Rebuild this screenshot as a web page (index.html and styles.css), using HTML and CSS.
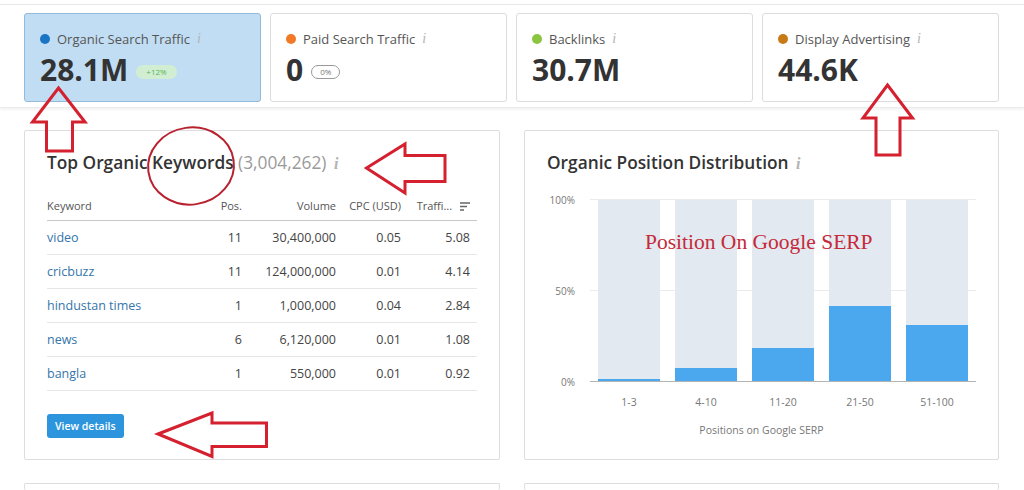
FILE: index.html
```html
<!DOCTYPE html>
<html lang="en">
<head>
<meta charset="utf-8">
<title>Domain Overview</title>
<link rel="stylesheet" href="styles.css">
</head>
<body>
<div class="summary">
  <div class="card card-active">
    <div class="card-label"><span class="dot dot-blue"></span>Organic Search Traffic <span class="info">i</span></div>
    <div class="card-value">28.1M <span class="badge badge-up">+12%</span></div>
  </div>
  <div class="card">
    <div class="card-label"><span class="dot dot-orange"></span>Paid Search Traffic <span class="info">i</span></div>
    <div class="card-value">0 <span class="badge badge-zero">0%</span></div>
  </div>
  <div class="card">
    <div class="card-label"><span class="dot dot-green"></span>Backlinks <span class="info">i</span></div>
    <div class="card-value">30.7M</div>
  </div>
  <div class="card">
    <div class="card-label"><span class="dot dot-brown"></span>Display Advertising <span class="info">i</span></div>
    <div class="card-value">44.6K</div>
  </div>
</div>

<div class="panels">
  <section class="panel">
    <h2 class="panel-title">Top Organic Keywords <span class="count">(3,004,262)</span> <span class="info info-lg">i</span></h2>
    <table class="kw">
      <colgroup><col class="c1"><col class="c2"><col class="c3"><col class="c4"><col class="c5"></colgroup>
      <thead>
        <tr><th class="l">Keyword</th><th>Pos.</th><th>Volume</th><th>CPC (USD)</th><th class="tr">Traffi... <svg class="sort" width="10" height="9" viewBox="0 0 10 9"><path d="M0 1h10M0 4.5h7M0 8h4" stroke="#666" stroke-width="1.4"/></svg></th></tr>
      </thead>
      <tbody>
        <tr><td class="l"><a>video</a></td><td>11</td><td>30,400,000</td><td>0.05</td><td class="tr">5.08</td></tr>
        <tr><td class="l"><a>cricbuzz</a></td><td>11</td><td>124,000,000</td><td>0.01</td><td class="tr">4.14</td></tr>
        <tr><td class="l"><a>hindustan times</a></td><td>1</td><td>1,000,000</td><td>0.04</td><td class="tr">2.84</td></tr>
        <tr><td class="l"><a>news</a></td><td>6</td><td>6,120,000</td><td>0.01</td><td class="tr">1.08</td></tr>
        <tr><td class="l"><a>bangla</a></td><td>1</td><td>550,000</td><td>0.01</td><td class="tr">0.92</td></tr>
      </tbody>
    </table>
    <button class="btn">View details</button>
  </section>

  <section class="panel">
    <h2 class="panel-title">Organic Position Distribution <span class="info info-lg">i</span></h2>
    <div class="chart">
      <div class="yaxis"><span>100%</span><span>50%</span><span>0%</span></div>
      <div class="plot-wrap">
        <div class="plot">
          <div class="bar"><div class="fill" style="height:1.2%"></div></div>
          <div class="bar"><div class="fill" style="height:7.4%"></div></div>
          <div class="bar"><div class="fill" style="height:18.2%"></div></div>
          <div class="bar"><div class="fill" style="height:41.2%"></div></div>
          <div class="bar"><div class="fill" style="height:30.9%"></div></div>
        </div>
        <div class="xlabels"><span>1-3</span><span>4-10</span><span>11-20</span><span>21-50</span><span>51-100</span></div>
      </div>
    </div>
    <div class="xtitle">Positions on Google SERP</div>
  </section>

  <section class="panel panel-next"></section>
  <section class="panel panel-next"></section>
</div>

<div class="annotations">
  <svg class="marks" width="1024" height="490" viewBox="0 0 1024 490">
    <g fill="none" stroke="#d4202f" stroke-width="3" stroke-linejoin="miter">
      <path d="M58.5 88 L85 122 L72.5 122 L72.5 151 L46.5 151 L46.5 122 L32.5 122 Z"/>
      <path d="M887.5 85 L912.5 118 L900 118 L900 155 L876 155 L876 118 L863 118 Z"/>
      <path d="M366.5 168 L405 144 L405 155.5 L445 155.5 L445 181.5 L405 181.5 L405 193 Z"/>
      <path d="M158 434 L212 413 L212 423 L266.5 423 L266.5 446.5 L212 446.5 L212 456.5 Z"/>
    </g>
    <ellipse cx="191" cy="166" rx="43" ry="38.5" fill="none" stroke="#b8212e" stroke-width="2" transform="rotate(-8 191 166)"/>
  </svg>
  <div class="note">Position On Google SERP</div>
</div>
</body>
</html>
```

FILE: styles.css
```css
* { box-sizing: border-box; }

html, body {
  margin: 0;
  padding: 0;
  background: #ffffff;
}

body {
  font-family: "Open Sans", "Noto Sans", sans-serif;
  color: #333333;
  width: 1024px;
  height: 490px;
  overflow: hidden;
  position: relative;
}

/* ---------- summary cards ---------- */
.summary {
  margin-top: 4px;
  border-top: 1px solid #e8e8e8;
  border-bottom: 1px solid #ececec;
  box-shadow: 0 2px 2px rgba(0, 0, 0, 0.05);
  padding: 8px 25px 5px 24px;
  display: grid;
  grid-template-columns: repeat(4, 1fr);
  gap: 9px;
}

.card {
  height: 89px;
  border: 1px solid #dcdcdc;
  border-radius: 3px;
  background: #ffffff;
  padding: 15px 14px 0 15px;
}

.card-active {
  background: #c1ddf3;
  border-color: #93bad8;
}

.card-label {
  display: flex;
  align-items: center;
  height: 20px;
  font-size: 13px;
  color: #555555;
  white-space: nowrap;
}

.dot {
  width: 10px;
  height: 10px;
  border-radius: 50%;
  margin-right: 7px;
  flex: none;
}
.dot-blue { background: #1b75c4; }
.dot-orange { background: #f07a26; }
.dot-green { background: #8bc53f; }
.dot-brown { background: #c87a14; }

.info {
  font-family: "Liberation Serif", "DejaVu Serif", serif;
  font-style: italic;
  color: #b3b3b3;
  font-size: 14px;
  margin-left: 7px;
}
.info-lg { font-size: 16px; margin-left: 3px; }

.card-value {
  margin-top: 3px;
  font-size: 30px;
  line-height: 36px;
  font-weight: 700;
  color: #333333;
  display: flex;
  align-items: center;
}

.badge {
  display: inline-block;
  margin-left: 8px;
  margin-top: 3px;
  height: 14px;
  line-height: 14px;
  padding: 0 7px;
  border-radius: 7px;
  font-size: 8px;
  font-weight: 400;
}
.badge-up {
  background: #d2eed2;
  color: #56b356;
  padding: 0 10px;
}
.badge-zero {
  border: 1px solid #9a9a9a;
  color: #777777;
  line-height: 12px;
  padding: 0 8px;
}

/* ---------- panels ---------- */
.panels {
  margin-top: 22px;
  padding: 0 25px 0 24px;
  display: grid;
  grid-template-columns: 1fr 1fr;
  column-gap: 24px;
  row-gap: 23px;
}

.panel {
  border: 1px solid #dddddd;
  border-radius: 2px;
  background: #ffffff;
  padding: 20px 22px 21px 22px;
}

.panel-next {
  height: 7px;
  padding: 0;
  border-bottom: none;
}

.panel-title {
  margin: 0;
  font-size: 17.3px;
  line-height: 24px;
  font-weight: 600;
  color: #333333;
  white-space: nowrap;
}
.count {
  font-weight: 400;
  color: #9a9a9a;
}

/* ---------- keywords table ---------- */
.kw {
  margin-top: 12px;
  width: 430px;
  border-collapse: collapse;
  table-layout: fixed;
  font-size: 12.5px;
}
.c1 { width: 140px; }
.c2 { width: 55px; }
.c3 { width: 94px; }
.c4 { width: 65px; }
.c5 { width: 76px; }

.kw th {
  height: 32px;
  font-size: 11px;
  font-weight: 400;
  color: #555555;
  text-align: right;
  vertical-align: bottom;
  padding: 0 0 7px 0;
  border-bottom: 1px solid #c8c8c8;
  white-space: nowrap;
}
.kw td {
  height: 34px;
  text-align: right;
  padding: 0;
  color: #444444;
  border-bottom: 1px solid #e6e6e6;
  white-space: nowrap;
}
.kw .l { text-align: left; }
.kw .tr { padding-right: 7px; }
.kw th.tr { padding-right: 7px; }
.kw a { color: #3575aa; }

.sort {
  margin-left: 5px;
  vertical-align: -1px;
}

.btn {
  margin-top: 23px;
  display: block;
  height: 24px;
  padding: 0 8px;
  border: none;
  border-radius: 3px;
  background: #2d95dd;
  color: #ffffff;
  font-family: "Open Sans", sans-serif;
  font-size: 10.5px;
  font-weight: 600;
}

/* ---------- chart ---------- */
.chart {
  margin-top: 24px;
  display: flex;
}

.yaxis {
  width: 28px;
  height: 183px;
  display: flex;
  flex-direction: column;
  justify-content: space-between;
  align-items: flex-end;
  font-size: 10px;
  color: #777777;
  margin-right: 15px;
}
.yaxis span {
  height: 1px;
  line-height: 1px;
}

.plot-wrap {
  flex: 1;
}

.plot {
  height: 183px;
  border-top: 1px solid #ebebeb;
  border-bottom: 1px solid #b4b4b4;
  background: linear-gradient(#ebebeb, #ebebeb) 0 50% / 100% 1px no-repeat;
  padding: 0 8px;
  display: flex;
  gap: 15px;
  margin-top: -1px;
}

.bar {
  flex: 1;
  background: #e2e9f0;
  display: flex;
  align-items: flex-end;
}
.fill {
  width: 100%;
  background: #4ba8ee;
}

.xlabels {
  margin-top: 12px;
  padding: 0 8px;
  display: flex;
  gap: 15px;
  font-size: 10.5px;
  color: #777777;
  line-height: 16px;
}
.xlabels span {
  flex: 1;
  text-align: center;
}

.xtitle {
  margin-top: 12px;
  text-align: center;
  font-size: 10.5px;
  color: #777777;
  line-height: 16px;
}

/* ---------- annotation overlay ---------- */
.annotations {
  position: absolute;
  left: 0;
  top: 0;
  width: 1024px;
  height: 490px;
  pointer-events: none;
}
.marks {
  position: absolute;
  left: 0;
  top: 0;
}
.note {
  position: absolute;
  left: 645px;
  top: 229px;
  font-family: "Liberation Serif", "DejaVu Serif", serif;
  font-size: 21.5px;
  line-height: 26px;
  color: #c52a3a;
  white-space: nowrap;
}
```
